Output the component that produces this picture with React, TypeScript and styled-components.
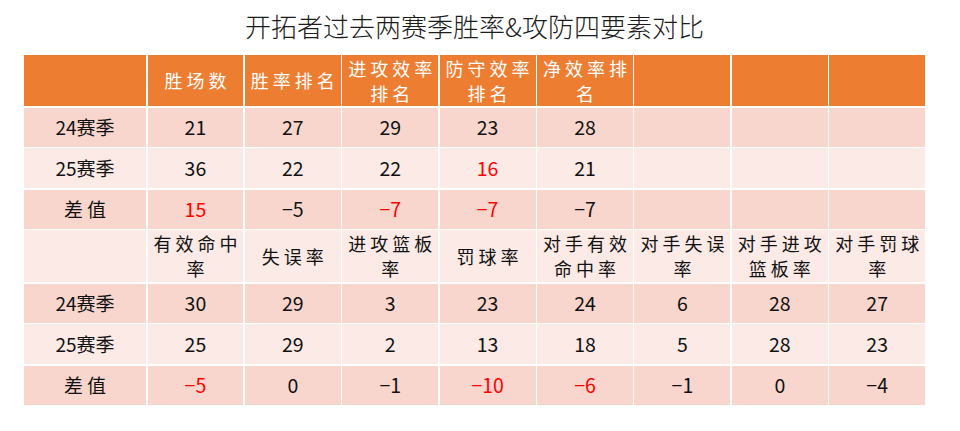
import React from "react";
import styled, { createGlobalStyle } from "styled-components";

const Global = createGlobalStyle`
  html, body { margin: 0; padding: 0; background: #ffffff; }
  body { font-family: "Noto Sans CJK SC", "Noto Sans", sans-serif; }
`;

const Page = styled.div`
  width: 960px;
  height: 431px;
  display: flex;
  flex-direction: column;
  align-items: flex-start;
  box-sizing: border-box;
  padding-left: 24px;
`;

const Title = styled.h1`
  margin: 0;
  width: 901px;
  height: 55px;
  display: flex;
  align-items: flex-start;
  justify-content: center;
  font-family: "Noto Sans CJK SC", sans-serif;
  font-weight: 300;
  font-size: 26px;
  line-height: 36px;
  padding-top: 8px;
  color: #1c1c1c;
  box-sizing: border-box;
`;

const Grid = styled.div`
  display: grid;
  grid-template-columns: 122px repeat(8, 95.9px);
  grid-template-rows: 51px 39px 40px 39px 52px 39px 40px 39px;
  column-gap: 1.5px;
  row-gap: 1.5px;
  background: #ffffff;
`;

type Tone = "head" | "dark" | "light";

const Cell = styled.div<{ $tone: Tone; $red?: boolean }>`
  display: flex;
  align-items: center;
  justify-content: center;
  text-align: center;
  box-sizing: border-box;
  padding: 0 2px;
  background: ${(p) =>
    p.$tone === "head" ? "#ED7D31" : p.$tone === "dark" ? "#F8D6CD" : "#FBEAE6"};
  color: ${(p) => (p.$tone === "head" ? "#ffffff" : p.$red ? "#FF0000" : "#111111")};
  font-family: "Noto Sans CJK SC", sans-serif;
`;

const Label = styled.span`
  font-size: 18px;
  letter-spacing: 4px;
  line-height: 25px;
  margin-right: -4px;
  word-break: break-all;
`;

const Num = styled.span`
  font-size: 19.5px;
  line-height: 24px;
`;

const RowLabel = styled.span<{ $spaced?: boolean }>`
  font-size: 19px;
  line-height: 24px;
  letter-spacing: ${(p) => (p.$spaced ? "4px" : "0px")};
  margin-right: ${(p) => (p.$spaced ? "-4px" : "0px")};
`;

type Val = { v: string; red?: boolean };

const header1 = ["", "胜场数", "胜率排名", "进攻效率排名", "防守效率排名", "净效率排名", "", "", ""];
const header2 = ["", "有效命中率", "失误率", "进攻篮板率", "罚球率", "对手有效命中率", "对手失误率", "对手进攻篮板率", "对手罚球率"];

const block1: { label: string; vals: Val[] }[] = [
  { label: "24赛季", vals: [{ v: "21" }, { v: "27" }, { v: "29" }, { v: "23" }, { v: "28" }, { v: "" }, { v: "" }, { v: "" }] },
  { label: "25赛季", vals: [{ v: "36" }, { v: "22" }, { v: "22" }, { v: "16", red: true }, { v: "21" }, { v: "" }, { v: "" }, { v: "" }] },
  { label: "差值", vals: [{ v: "15", red: true }, { v: "−5" }, { v: "−7", red: true }, { v: "−7", red: true }, { v: "−7" }, { v: "" }, { v: "" }, { v: "" }] },
];

const block2: { label: string; vals: Val[] }[] = [
  { label: "24赛季", vals: [{ v: "30" }, { v: "29" }, { v: "3" }, { v: "23" }, { v: "24" }, { v: "6" }, { v: "28" }, { v: "27" }] },
  { label: "25赛季", vals: [{ v: "25" }, { v: "29" }, { v: "2" }, { v: "13" }, { v: "18" }, { v: "5" }, { v: "28" }, { v: "23" }] },
  { label: "差值", vals: [{ v: "−5", red: true }, { v: "0" }, { v: "−1" }, { v: "−10", red: true }, { v: "−6", red: true }, { v: "−1" }, { v: "0" }, { v: "−4" }] },
];

const tones: Tone[] = ["dark", "light", "dark"];

function DataRows({ rows }: { rows: { label: string; vals: Val[] }[] }) {
  return (
    <>
      {rows.map((r, i) => (
        <React.Fragment key={r.label}>
          <Cell $tone={tones[i]}>
            <RowLabel $spaced={r.label === "差值"}>{r.label}</RowLabel>
          </Cell>
          {r.vals.map((c, j) => (
            <Cell key={j} $tone={tones[i]} $red={c.red}>
              <Num>{c.v}</Num>
            </Cell>
          ))}
        </React.Fragment>
      ))}
    </>
  );
}

export default function App() {
  return (
    <>
      <Global />
      <Page>
        <Title>开拓者过去两赛季胜率&amp;攻防四要素对比</Title>
        <Grid>
          {header1.map((h, i) => (
            <Cell key={"h1" + i} $tone="head">
              <Label>{h}</Label>
            </Cell>
          ))}
          <DataRows rows={block1} />
          {header2.map((h, i) => (
            <Cell key={"h2" + i} $tone="light">
              <Label>{h}</Label>
            </Cell>
          ))}
          <DataRows rows={block2} />
        </Grid>
      </Page>
    </>
  );
}
